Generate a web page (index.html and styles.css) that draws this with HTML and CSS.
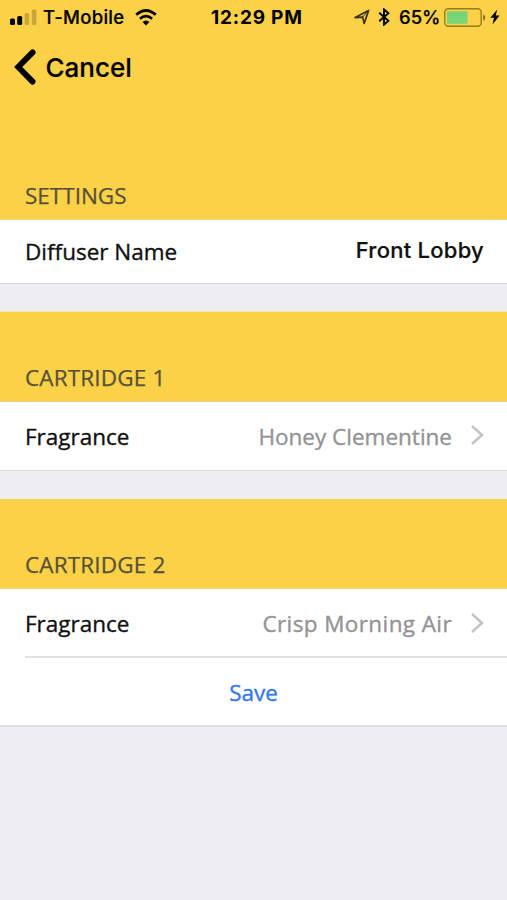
FILE: index.html
```html
<!DOCTYPE html>
<html lang="en">
<head>
<meta charset="utf-8">
<title>Diffuser Settings</title>
<link rel="stylesheet" href="styles.css">
</head>
<body>
<header class="top">
  <div class="status">
    <div class="status-left">
      <svg class="signal" width="27" height="17" viewBox="0 0 27 17"><rect x="0" y="9.5" width="5" height="6.5" rx="1.6"/><rect x="7.2" y="7" width="5" height="9" rx="1.6"/><g fill="#c8a638"><rect x="14.6" y="4" width="4.6" height="12" rx="1.6"/><rect x="21.8" y="0.5" width="4.6" height="15.5" rx="1.6"/></g></svg>
      <span class="carrier">T-Mobile</span>
      <svg class="wifi" width="22" height="17" viewBox="0 0 22 17"><g fill="none" stroke="#000" stroke-width="2.7"><path d="M1.2 5.8Q11-2.8 20.8 5.8"/><path d="M4.9 9.8Q11 4.4 17.1 9.8"/></g><path d="M7.5 13Q11 10 14.5 13L11 16.5Z"/></svg>
    </div>
    <span class="time">12:29 PM</span>
    <div class="status-right">
      <svg width="16" height="16" viewBox="0 0 16 16"><path d="M1.2 8.6L14.6 1.4L10.2 14.4L8.6 8.1Z" fill="none" stroke="#3a3010" stroke-width="1.7" stroke-linejoin="round"/><path d="M14.6 1.4L8.6 8.1" stroke="#3a3010" stroke-width="1"/></svg>
      <svg class="bluetooth" width="12" height="18" viewBox="0 0 12 18"><path d="M1.2 4.7L10.4 12.8L6 16.7V1.3L10.4 5.2L1.2 13.3" fill="none" stroke="#000" stroke-width="1.9"/></svg>
      <span class="percent">65%</span>
      <svg class="battery" width="42" height="19" viewBox="0 0 42 19"><rect x=".8" y=".8" width="36.4" height="17.4" rx="3.5" fill="none" stroke="#987b23" stroke-width="1.4"/><rect x="3" y="3.3" width="20.5" height="12.4" rx="1" fill="#75d578"/><path d="M39 6.4Q41.4 7 41.4 9.5T39 12.6Z" fill="#987b23"/></svg>
      <svg class="bolt" width="10" height="16" viewBox="0 0 10 16"><path d="M7.2.5L.4 8.8H4L2.5 15.5L9.6 6.5H5.7Z"/></svg>
    </div>
  </div>
  <div class="nav">
    <svg width="22" height="36" viewBox="0 0 22 36"><path d="M18.6 3.4L4.2 18L18.6 32.6" fill="none" stroke="#000" stroke-width="5.8" stroke-linecap="round" stroke-linejoin="miter"/></svg>
    <span class="cancel">Cancel</span>
  </div>
  <h2 class="heading settings">SETTINGS</h2>
</header>
<main>
  <div class="row name-row"><span class="label">Diffuser Name</span><span class="name">Front Lobby</span></div>
  <div class="gap dashed"></div>
  <h2 class="heading band">CARTRIDGE 1</h2>
  <div class="row"><span class="label">Fragrance</span><span class="value">Honey Clementine</span><svg class="chevron" width="14" height="22" viewBox="0 0 14 22"><path d="M2 2L12 11L2 20" fill="none" stroke="#c3c3c6" stroke-width="2.5"/></svg></div>
  <div class="gap"></div>
  <h2 class="heading band">CARTRIDGE 2</h2>
  <div class="row inset"><span class="label">Fragrance</span><span class="value crisp">Crisp Morning Air</span><svg class="chevron" width="14" height="22" viewBox="0 0 14 22"><path d="M2 2L12 11L2 20" fill="none" stroke="#c3c3c6" stroke-width="2.5"/></svg></div>
  <div class="row save-row"><span class="save">Save</span></div>
</main>
</body>
</html>
```
FILE: styles.css
```css
* { box-sizing: border-box; }
body { margin: 0; background: #eeedf2; color: #111; font-family: "Open Sans", sans-serif; }
svg { display: block; flex: none; }
span, h2 { white-space: nowrap; }
.top { height: 220px; background: #fad147; display: flex; flex-direction: column; color: #000; font-family: Inter, sans-serif; border-bottom: 1px solid #ecd487; }
.status { height: 34px; display: grid; grid-template-columns: 211px 92px 1fr; align-items: center; padding-right: 7px; }
.status-left, .status-right { display: flex; align-items: center; }
.status-left { padding-left: 10px; }
.carrier { margin-left: 6px; width: 81px; font-size: 18.5px; font-weight: 500; letter-spacing: .3px; -webkit-text-stroke: .2px; }
.wifi { margin-left: 11px; }
.time { font-size: 19px; font-weight: 700; letter-spacing: .8px; }
.status-right { justify-content: flex-end; }
.bluetooth { margin-left: 8px; }
.percent { margin-left: 9px; width: 41px; font-size: 18.5px; font-weight: 500; -webkit-text-stroke: .2px; }
.battery { margin-left: 4px; }
.bolt { margin-left: 4px; }
.nav { height: 66px; display: flex; align-items: center; padding-left: 14px; }
.cancel { margin-left: 9.5px; font-size: 26px; font-weight: 500; -webkit-text-stroke: .2px; }
.heading { margin: 0; padding: 0 25px; font: 400 22.5px/30px "Open Sans", sans-serif; color: #555038; -webkit-text-stroke: .25px; }
.settings { margin-top: 81px; }
.band { height: 90px; padding-top: 50.5px; letter-spacing: .15px; background: #fad147; border-bottom: 1px solid #ecd487; }
.row { height: 68px; background: #fff; display: flex; align-items: center; padding: 0 23px 0 25px; }
.name-row { height: 64px; border-bottom: 1px solid #d3d3d8; }
.label, .value, .save { font-size: 22.5px; -webkit-text-stroke: .35px; }
.name { margin: 0 0 3px auto; font: 500 22px/30px Inter, sans-serif; letter-spacing: .25px; -webkit-text-stroke: .2px; }
.value { margin-left: auto; color: #939395; }
.crisp { letter-spacing: .4px; }
.chevron { margin: 0 0 2px 18px; }
.gap { height: 29px; border-top: 1px solid #dcdce0; }
.dashed { height: 28px; border-top: 0; border-bottom: 1px solid #f4e4ae; }
.inset { background: linear-gradient(#e2e2e4, #e2e2e4) 25px 100% / 100% 2px no-repeat #fff; height: 69px; }
.save-row { height: 69px; justify-content: center; padding: 1px 0 0; border-bottom: 2px solid #dfdfe3; }
.save { color: #3379ef; }
```
